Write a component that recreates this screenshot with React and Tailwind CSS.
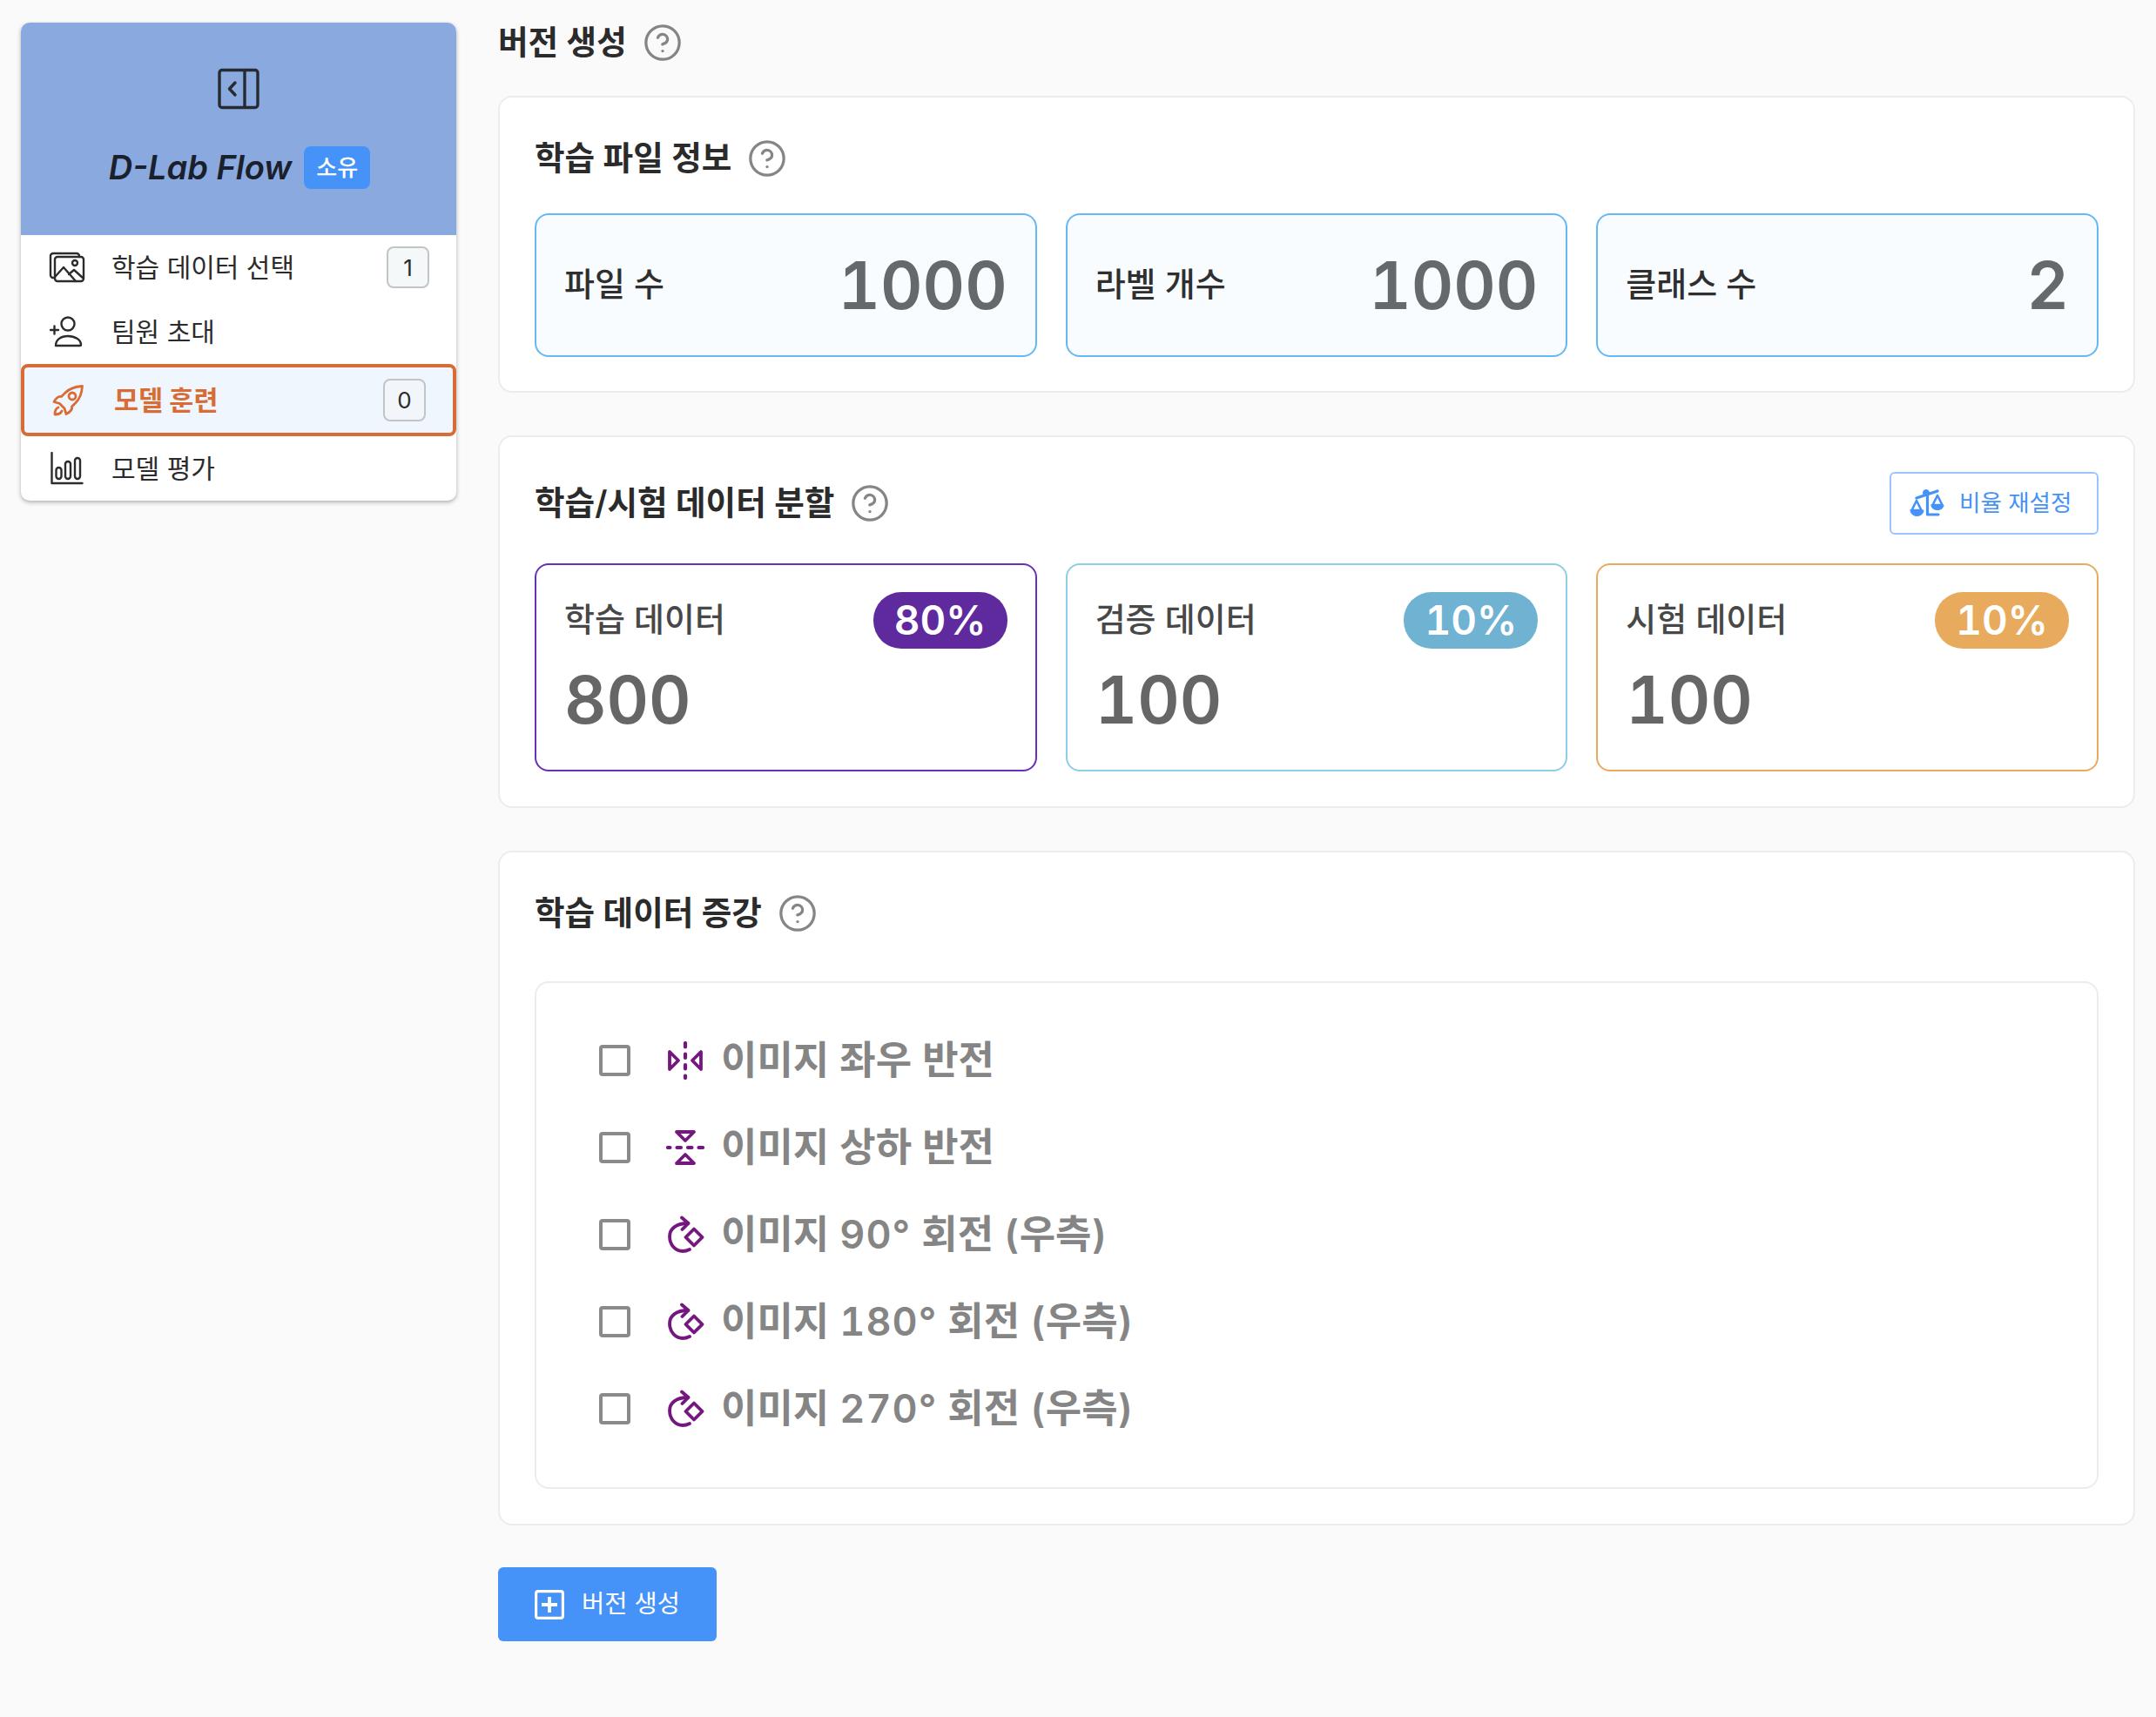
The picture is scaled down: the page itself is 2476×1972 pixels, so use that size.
import { CircleHelp } from "lucide-react";

function PanelIcon() {
    return (
        <svg width="48" height="48" viewBox="0 0 48 48" fill="none" stroke="#262b33" strokeWidth="3.4" strokeLinejoin="round" strokeLinecap="round">
            <rect x="2" y="2.5" width="44" height="43" rx="3" />
            <path d="M31 3v42" />
            <path d="M20 17l-6.500 7 6.500 7" />
        </svg>
    );
}

function ImagesIcon() {
    return (
        <svg width="42" height="36" viewBox="0 0 42 36" fill="none" stroke="#2c2c2c" strokeWidth="2.400" strokeLinejoin="round" strokeLinecap="round">
            <path d="M7 30H5a3 3 0 0 1-3-3V5a3 3 0 0 1 3-3h27a3 3 0 0 1 3 3v1" />
            <rect x="7" y="6" width="33" height="28" rx="3" />
            <circle cx="30" cy="13" r="3" />
            <path d="M8 28l9-10 14 16" />
            <path d="M23 26l6-5 10 9" />
        </svg>
    );
}

function UserPlusIcon() {
    return (
        <svg width="40" height="36" viewBox="0 0 40 36" fill="none" stroke="#2c2c2c" strokeWidth="2.400" strokeLinejoin="round" strokeLinecap="round">
            <circle cx="21" cy="9" r="7.500" />
            <path d="M7 34c0-7 6-11 14-11s15 4 15 10c0 .7-.4 1-1 1H7z" />
            <path d="M1 16h9M5.500 11.500v9" />
        </svg>
    );
}

function RocketIcon() {
    return (
        <svg width="60" height="60" viewBox="0 0 60 60" fill="none" stroke="#d96b34" strokeWidth="2.800" strokeLinejoin="round" strokeLinecap="round">
            <path d="M46.500 13.500C39 14 32 16 27 21l-4.500 4.500C19 24.500 16 28 14 31.500l6.500 2 5.500 5.500 2 6.500c4-2 7.500-4.500 6.500-8.500l4.500-4.500c5-5 7-11.500 7.500-19z" />
            <circle cx="35" cy="25" r="4" />
            <path d="M19 38c-3 1-4 5-4 8 3 0 7-1 8-4" />
        </svg>
    );
}

function BarsIcon() {
    return (
        <svg width="38" height="38" viewBox="0 0 38 38" fill="none" stroke="#2c2c2c" strokeWidth="2.400" strokeLinejoin="round" strokeLinecap="round">
            <path d="M1.500 1v35h35" />
            <rect x="6.500" y="18" width="6" height="13" rx="3" />
            <rect x="17" y="11" width="6" height="20" rx="3" />
            <rect x="28" y="7" width="6" height="24" rx="3" />
        </svg>
    );
}

function ScaleIcon() {
    return (
        <svg width="44" height="34" viewBox="0 0 44 32" fill="#4592f8" stroke="#4592f8" strokeLinejoin="round" strokeLinecap="round">
            <path d="M8 10L32 2" fill="none" strokeWidth="3.400" />
            <circle cx="19" cy="4" r="3.500" />
            <path d="M20.500 6v23M20.500 29H33" fill="none" strokeWidth="3.200" />
            <path d="M8 13L2.500 24h11z" fill="none" strokeWidth="2.600" />
            <path d="M1 24h15c0 4-3.500 6.500-7.500 6.500S1 28 1 24z" strokeWidth="1" />
            <path d="M32 7l-5.500 11h11z" fill="none" strokeWidth="2.600" />
            <path d="M25 18h14c0 3.500-3 5.500-7 5.500S25 21.500 25 18z" strokeWidth="1" />
        </svg>
    );
}

function FlipHIcon({ vertical }) {
    return (
        <svg width="44" height="44" viewBox="0 0 44 44" fill="none" stroke="#74177f" strokeWidth="3.800" strokeLinejoin="round" strokeLinecap="round" className={vertical ? "rotate-90" : ""}>
            <path d="M22 2v40" strokeWidth="4.200" strokeDasharray="4.500 8" />
            <path d="M4 12v20l10-10z" />
            <path d="M40 12v20l-10-10z" />
        </svg>
    );
}

function RotateIcon() {
    return (
        <svg width="44" height="44" viewBox="0 0 44 44" fill="none" stroke="#74177f" strokeWidth="3.800" strokeLinejoin="round" strokeLinecap="round">
            <path d="M25 9C12 9 4 15 4 24c0 10 7 17 15 17 3 0 6-1 8-2" />
            <path d="M18 2.500L25.500 9l-7 7" />
            <path d="M32 15.500l9.500 9.500-9.500 9.500-9.500-9.500z" />
        </svg>
    );
}

function PlusBoxIcon() {
    return (
        <svg width="34" height="34" viewBox="0 0 34 34" fill="none" stroke="#fff" strokeWidth="3.200" strokeLinejoin="round">
            <rect x="1.600" y="1.600" width="30.800" height="30.800" rx="2.500" />
            <path d="M17 8v18M8 17h18" strokeWidth="3.800" />
        </svg>
    );
}

function Heading({ children }) {
    return (
        <div className="flex items-center gap-[18px]">
            <h2 className="text-[37.600px] leading-[52px] font-semibold text-[#2b2b2b]">{children}</h2>
            <CircleHelp size={46} strokeWidth={1.7} color="#858585" />
        </div>
    );
}

function MenuItem({ icon, label, count }) {
    return (
        <div className="flex h-[74px] items-center pr-[31px] pl-[29px]">
            <div className="flex w-[48px] justify-center">{icon}</div>
            <span className="ml-[27px] flex-1 text-[30px] text-[#2b2b2b]">{label}</span>
            {count !== undefined && (
                <span className="flex h-[48px] w-[49px] items-center justify-center rounded-[8px] border-2 border-[#c2c5c7] bg-[#f5f8f9] text-[26px] text-[#2b2b2b]">{count}</span>
            )}
        </div>
    );
}

function StatCard({ label, value }) {
    return (
        <div className="flex h-[165px] items-center justify-between rounded-[16px] border-2 border-[#64b9f4] bg-[#f8fcff] px-[32px]">
            <span className="mb-[3px] text-[38px] font-medium text-[#2f2f2f]">{label}</span>
            <span className="text-[75px] leading-none font-semibold text-[#66696c] tabular-nums">{value}</span>
        </div>
    );
}

function SplitCard({ label, percent, value, cardClass, badgeClass }) {
    return (
        <div className={`h-[239px] rounded-[16px] border-2 bg-white px-[32px] pt-[31px] ${cardClass}`}>
            <div className="flex items-center justify-between">
                <span className="mb-[2px] text-[38px] font-medium text-[#484848]">{label}</span>
                <span className={`flex h-[65px] w-[154px] items-center justify-center rounded-[32px] text-[46px] font-semibold text-white tabular-nums ${badgeClass}`}>{percent}</span>
            </div>
            <div className="mt-[13px] text-[75px] leading-[92px] font-semibold text-[#666666] tabular-nums">{value}</div>
        </div>
    );
}

function AugRow({ icon, children }) {
    return (
        <label className="flex h-[100px] items-center">
            <span className="block h-[36px] w-[36px] rounded-[4px] border-[4px] border-[#8a8a8a] bg-white" />
            <span className="ml-[41px] flex w-[44px] justify-center">{icon}</span>
            <span className="ml-[19px] text-[45px] font-semibold text-[#858585] tabular-nums">{children}</span>
        </label>
    );
}

export default function App() {
    return (
        <div className="flex min-h-[1972px] items-start gap-[48px] bg-[#fafafa] pt-[23px] pr-[24px] pl-[24px] font-[Inter,'Noto_Sans_CJK_KR',sans-serif]">
            {/* Sidebar */}
            <aside className="mt-[3px] w-[500px] shrink-0 rounded-[10px] bg-white shadow-[0_2px_5px_rgba(0,0,0,0.3)]">
                <div className="flex h-[244px] flex-col items-center rounded-t-[10px] bg-[#8aa9de] pt-[52px]">
                    <PanelIcon />
                    <div className="mt-[38px] ml-[2px] flex items-center gap-[14px]">
                        <span className="text-[38px] font-semibold text-[#1a202c] italic">D-Lab Flow</span>
                        <span className="flex h-[49px] w-[76px] items-center justify-center rounded-[8px] bg-[#4592f8] text-[26px] font-medium text-white">소유</span>
                    </div>
                </div>
                <MenuItem icon={<ImagesIcon />} label="학습 데이터 선택" count={1} />
                <MenuItem icon={<UserPlusIcon />} label="팀원 초대" />
                <div className="flex h-[83px] items-center rounded-[8px] border-[4px] border-[#d96b34] bg-[#eff6fe] pr-[31px] pl-[15px]">
                    <div className="flex w-[70px] justify-center"><RocketIcon /></div>
                    <span className="ml-[18px] flex-1 text-[30.500px] font-bold text-[#d96b34]">모델 훈련</span>
                    <span className="flex h-[49px] w-[49px] items-center justify-center rounded-[8px] border-2 border-[#c2c5c7] bg-[#f2f6fa] text-[26px] text-[#2b2b2b]">0</span>
                </div>
                <MenuItem icon={<BarsIcon />} label="모델 평가" />
            </aside>

            {/* Main */}
            <main className="flex-1">
                <Heading>버전 생성</Heading>

                <section className="mt-[35px] rounded-[16px] border-2 border-[#e9ecf0] bg-white px-[40px] pt-[44px] pb-[39px]">
                    <Heading>학습 파일 정보</Heading>
                    <div className="mt-[37px] grid grid-cols-3 gap-[33px]">
                        <StatCard label="파일 수" value="1000" />
                        <StatCard label="라벨 개수" value="1000" />
                        <StatCard label="클래스 수" value="2" />
                    </div>
                </section>

                <section className="mt-[49px] rounded-[16px] border-2 border-[#e9ecf0] bg-white px-[40px] pt-[40px] pb-[40px]">
                    <div className="flex items-center justify-between">
                        <Heading>학습/시험 데이터 분할</Heading>
                        <button className="flex h-[72px] w-[240px] items-center gap-[13px] rounded-[6px] border-2 border-[#9cc4fb] bg-white pl-[21px] text-[26.500px] text-[#4592f8]">
                            <ScaleIcon />
                            비율 재설정
                        </button>
                    </div>
                    <div className="mt-[33px] grid grid-cols-3 gap-[33px]">
                        <SplitCard label="학습 데이터" percent="80%" value="800" cardClass="border-[#6a2fb8]" badgeClass="bg-[#5f2a9e]" />
                        <SplitCard label="검증 데이터" percent="10%" value="100" cardClass="border-[#8ecde6]" badgeClass="bg-[#70b2d2]" />
                        <SplitCard label="시험 데이터" percent="10%" value="100" cardClass="border-[#e8ab5d]" badgeClass="bg-[#e8ab5d]" />
                    </div>
                </section>

                <section className="mt-[49px] rounded-[16px] border-2 border-[#e9ecf0] bg-white px-[40px] pt-[44px] pb-[40px]">
                    <Heading>학습 데이터 증강</Heading>
                    <div className="mt-[52px] rounded-[16px] border-2 border-[#e9ecf0] px-[72px] pt-[39px] pb-[40px]">
                        <AugRow icon={<FlipHIcon />}>이미지 좌우 반전</AugRow>
                        <AugRow icon={<FlipHIcon vertical />}>이미지 상하 반전</AugRow>
                        <AugRow icon={<RotateIcon />}>이미지 <span className="tracking-[1px]">90°</span> 회전 (우측)</AugRow>
                        <AugRow icon={<RotateIcon />}>이미지 <span className="tracking-[1px]">180°</span> 회전 (우측)</AugRow>
                        <AugRow icon={<RotateIcon />}>이미지 <span className="tracking-[1px]">270°</span> 회전 (우측)</AugRow>
                    </div>
                </section>

                <button className="mt-[48px] flex h-[85px] w-[251px] items-center justify-center gap-[20px] rounded-[6px] bg-[#4592f8] text-[28.500px] text-white">
                    <PlusBoxIcon />
                    버전 생성
                </button>
            </main>
        </div>
    );
}
